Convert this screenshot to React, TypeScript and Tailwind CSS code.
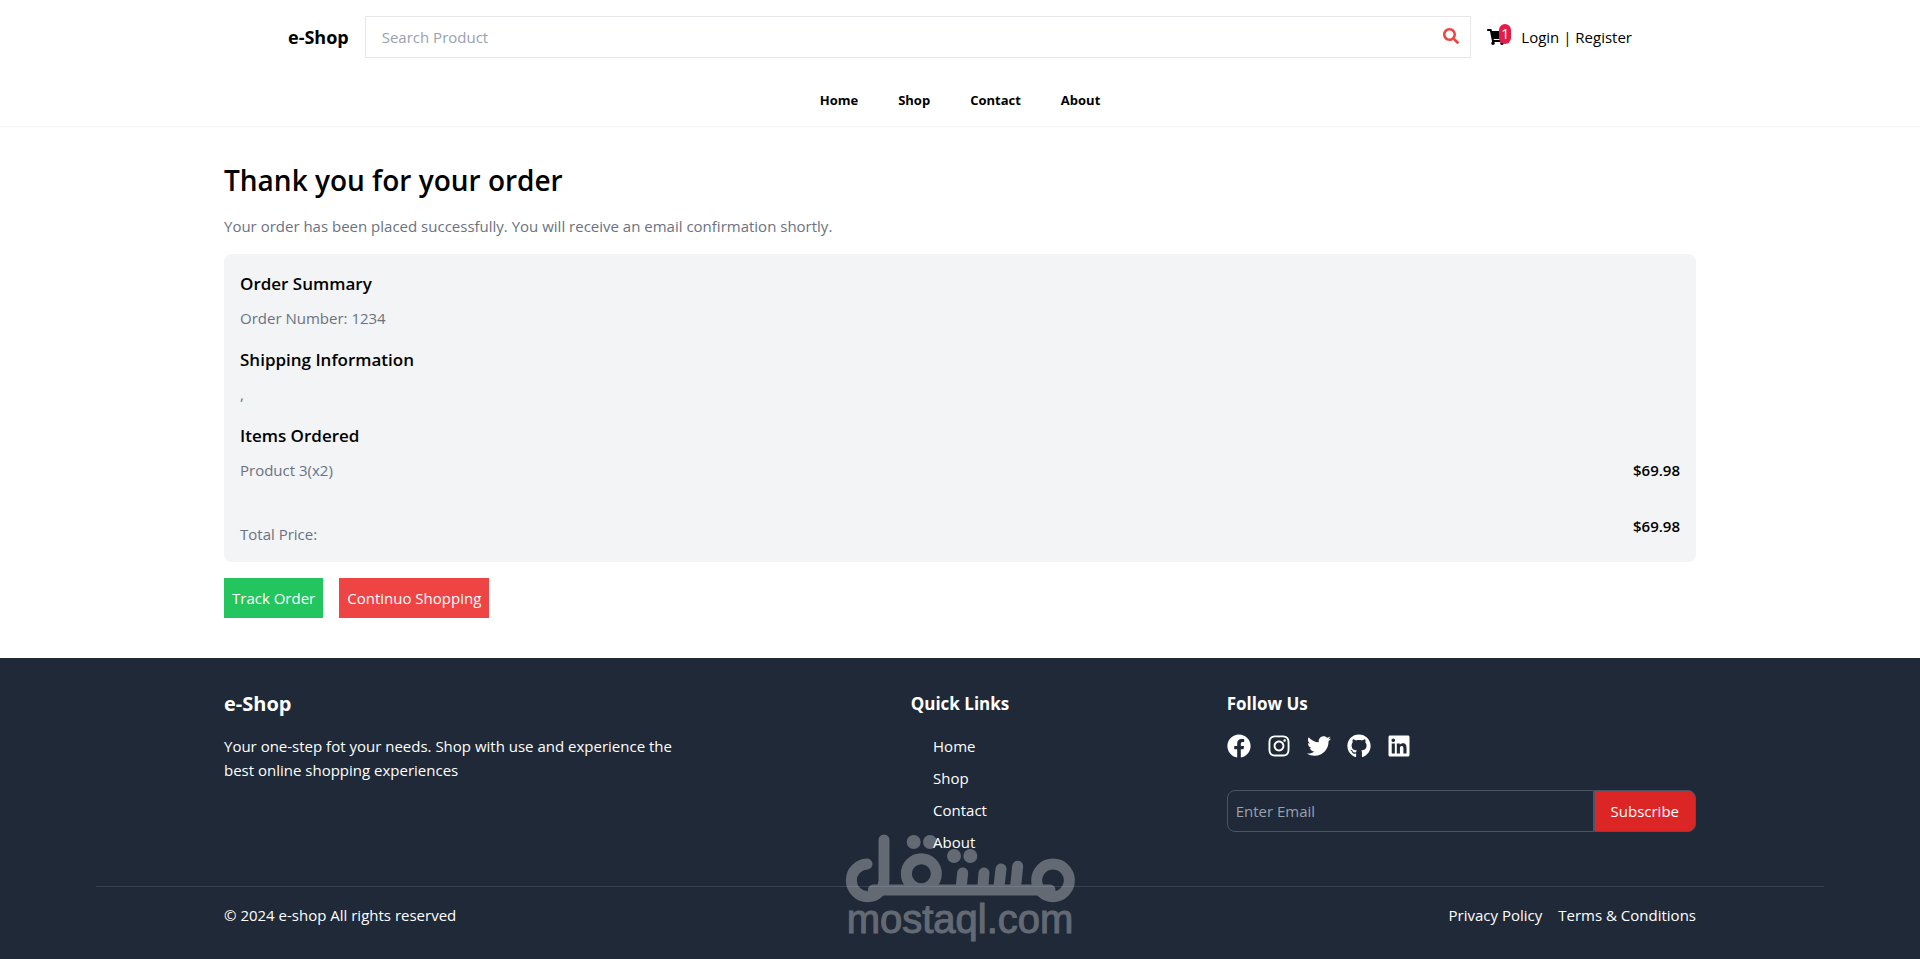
import { FaShoppingCart, FaSearch, FaFacebook, FaInstagram, FaTwitter, FaGithub, FaLinkedin } from 'react-icons/fa';

const links = ['Home', 'Shop', 'Contact', 'About'];

const order = {
  number: '1234',
  shipping: { address: '', city: '', zip: '' },
  items: [{ name: 'Product 3', quantity: 2, price: 34.99 }],
};

const socials = [
  { name: 'Facebook', Icon: FaFacebook },
  { name: 'Instagram', Icon: FaInstagram },
  { name: 'Twitter', Icon: FaTwitter },
  { name: 'Github', Icon: FaGithub },
  { name: 'Linkedin', Icon: FaLinkedin },
];

function Navbar() {
  return (
    <header className="bg-white shadow-[0_1px_1px_#f3f4f6]">
      <div className="max-w-[1536px] mx-auto px-24 py-4 flex items-center gap-4">
        <a href="#" className="text-lg/6 font-bold">e-Shop</a>
        <form className="relative flex-1">
          <input type="text" aria-label="Search Product" placeholder="Search Product" className="block w-full border border-gray-200 py-2 px-4 placeholder:text-gray-400 focus:outline-none" />
          <button type="submit" aria-label="Search" className="absolute top-3 right-3 text-[#ef4444]">
            <FaSearch size={16} />
          </button>
        </form>
        <div className="flex items-center gap-2.5">
          <a href="#" aria-label="Cart" className="relative block w-6">
            <FaShoppingCart size={18} />
            <span className="absolute -top-1 left-3 w-3 h-5 rounded-full bg-[#e11d48] text-white text-sm/5 text-center">1</span>
          </a>
          <button type="button">Login | Register</button>
        </div>
      </div>
      <nav className="flex items-center justify-center gap-10 py-4 text-[13px]/5 font-bold">
        {links.map(link => (
          <a key={link} href="#" className="hover:underline">{link}</a>
        ))}
      </nav>
    </header>
  );
}

function Order() {
  const total = order.items.reduce((sum, item) => sum + item.price * item.quantity, 0);

  return (
    <main className="max-w-[1536px] mx-auto px-8 pt-9 pb-10">
      <h2 className="text-[28px]/9 font-semibold mb-4">Thank you for your order</h2>
      <p className="text-gray-500">Your order has been placed successfully. You will receive an email confirmation shortly.</p>
      <div className="mt-4 p-4 rounded-lg bg-gray-100">
        <h3 className="text-[17px]/7 font-semibold mb-2">Order Summary</h3>
        <p className="text-gray-500">Order Number: {order.number}</p>
        <div className="mt-4">
          <h4 className="text-[17px]/7 font-semibold mb-2">Shipping Information</h4>
          <p className="text-gray-500">{order.shipping.address}</p>
          <p className="text-gray-500">{order.shipping.city},</p>
          <p className="text-gray-500">{order.shipping.zip}</p>
        </div>
        <div className="mt-4">
          <h4 className="text-[17px]/7 font-semibold mb-2">Items Ordered</h4>
          {order.items.map(item => (
            <div key={item.name} className="flex justify-between">
              <p className="text-gray-500">{item.name}(x{item.quantity})</p>
              <p className="font-semibold">${(item.price * item.quantity).toFixed(2)}</p>
            </div>
          ))}
        </div>
        <div className="mt-8 flex justify-between">
          <p className="mt-2 text-gray-500">Total Price:</p>
          <p className="font-semibold">${total.toFixed(2)}</p>
        </div>
      </div>
      <div className="mt-4 flex gap-4">
        <button type="button" className="p-2 bg-[#22c55e] text-white hover:bg-green-600">Track Order</button>
        <button type="button" className="p-2 bg-[#ef4444] text-white hover:bg-red-600">Continuo Shopping</button>
      </div>
    </main>
  );
}

function Watermark() {
  return (
    <div className="absolute bottom-6 left-1/2 w-[230px] -translate-x-1/2 text-white opacity-30 pointer-events-none">
      <svg viewBox="75 490 690 207" className="block w-full" fill="none" stroke="currentColor" strokeWidth="33" strokeLinecap="round" aria-hidden="true">
        <path d="M141 580A49 49 0 1 0 192 630V508" />
        <path d="M160 658H690" />
        <circle cx="304" cy="609" r="45" />
        <circle cx="699" cy="629" r="49" />
        <path d="M428 607L423 655M492 607L488 655M543 595L536 655M593 587L586 655" />
        <g fill="currentColor" stroke="none">
          <circle cx="281" cy="514" r="21" />
          <circle cx="330" cy="514" r="21" />
          <circle cx="402" cy="556" r="21" />
          <circle cx="451" cy="556" r="21" />
        </g>
      </svg>
      <p className="text-center text-[40px]/8 [-webkit-text-stroke:1px] font-['Liberation_Sans',Arial,sans-serif]">mostaql.com</p>
    </div>
  );
}

function Footer() {
  return (
    <footer className="relative bg-[#1f2937] text-white px-24 py-8">
      <div className="max-w-[1536px] mx-auto px-8 grid grid-cols-3 gap-8">
        <div>
          <h3 className="text-xl/7 font-bold">e-Shop</h3>
          <p className="mt-4">Your one-step fot your needs. Shop with use and experience the best online shopping experiences</p>
        </div>
        <div className="flex flex-col items-center">
          <h4 className="text-[17px]/7 font-bold">Quick Links</h4>
          <ul className="mt-4 mb-2 space-y-2">
            {links.map(link => (
              <li key={link}><a href="#" className="hover:underline">{link}</a></li>
            ))}
          </ul>
        </div>
        <div>
          <h4 className="text-[17px]/7 font-bold">Follow Us</h4>
          <div className="mt-4 flex gap-4">
            {socials.map(({ name, Icon }) => (
              <a key={name} href="#" aria-label={name} className="hover:text-gray-400"><Icon size={24} /></a>
            ))}
          </div>
          <form className="mt-8 flex">
            <input type="email" aria-label="Enter Email" placeholder="Enter Email" className="flex-1 min-w-0 p-2 border border-gray-600 rounded-l-lg placeholder:text-gray-400 focus:outline-none" />
            <button type="submit" className="px-4 py-2 bg-[#dc2626] border border-gray-600 rounded-r-lg">Subscribe</button>
          </form>
        </div>
      </div>
      <div className="mt-6 pt-4 border-t border-gray-700">
        <div className="max-w-[1536px] mx-auto px-8 flex justify-between">
          <p>© 2024 e-shop All rights reserved</p>
          <div className="flex gap-4">
            <a href="#" className="hover:underline">Privacy Policy</a>
            <a href="#" className="hover:underline">Terms &amp; Conditions</a>
          </div>
        </div>
      </div>
      <Watermark />
    </footer>
  );
}

export default function App() {
  return (
    <div className="bg-white text-black text-[15px]/6 font-['Open_Sans','Noto_Sans',sans-serif]">
      <Navbar />
      <Order />
      <Footer />
    </div>
  );
}
